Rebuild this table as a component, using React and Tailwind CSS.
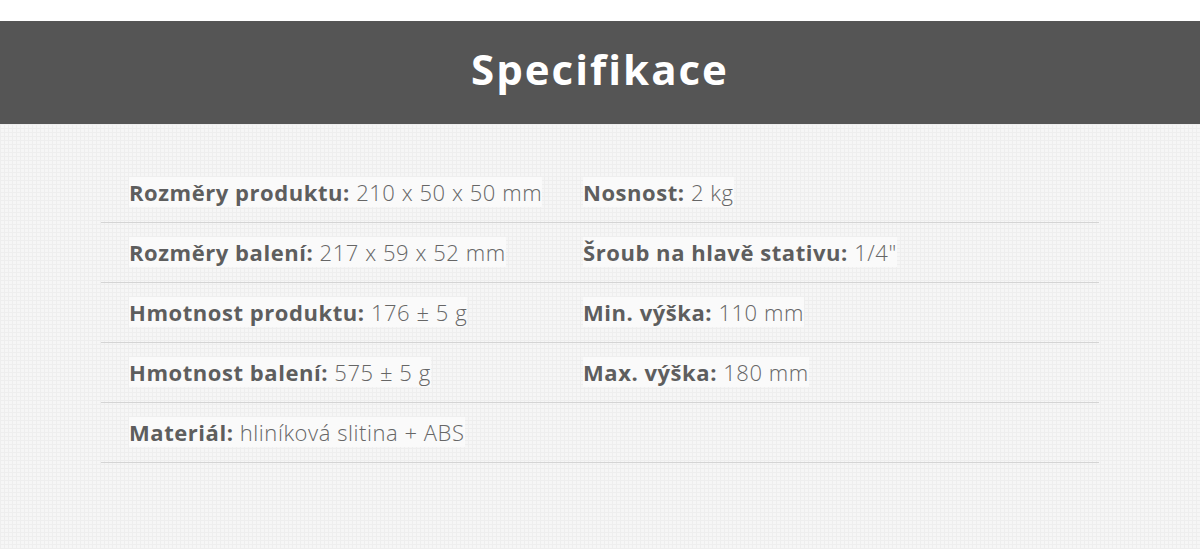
const rows = [
  [
    { label: "Rozměry produktu:", value: "210 x 50 x 50 mm" },
    { label: "Nosnost:", value: "2 kg" },
  ],
  [
    { label: "Rozměry balení:", value: "217 x 59 x 52 mm" },
    { label: "Šroub na hlavě stativu:", value: "1/4\"" },
  ],
  [
    { label: "Hmotnost produktu:", value: "176 ± 5 g" },
    { label: "Min. výška:", value: "110 mm" },
  ],
  [
    { label: "Hmotnost balení:", value: "575 ± 5 g" },
    { label: "Max. výška:", value: "180 mm" },
  ],
  [{ label: "Materiál:", value: "hliníková slitina + ABS" }, null],
];

const Cell = ({ item }) => {
  if (!item) return <div />;
  return (
    <div className="flex items-center pl-7 pb-[2px]">
      <span className="whitespace-nowrap bg-[#fafafa] text-[22px] leading-[30px] text-[#666] tracking-[0.55px]">
        <b className="font-bold text-[#5e5e5e]">{item.label}</b>{" "}
        <span className="font-light">{item.value}</span>
      </span>
    </div>
  );
};

export default function App() {
  return (
    <div
      className="w-[1200px] h-[549px] overflow-hidden bg-white"
      style={{ fontFamily: '"Open Sans", "Noto Sans", sans-serif' }}
    >
      <div className="h-[21px] bg-white" />
      <div className="h-[103px] bg-[#555555] flex items-center justify-center">
        <h2 className="text-[42px] font-bold text-white tracking-[2px] leading-none pb-[7px]">
          Specifikace
        </h2>
      </div>
      <div className="h-[425px] bg-[#f6f6f6] bg-[linear-gradient(#eeeeee_1px,transparent_1px),linear-gradient(90deg,#eeeeee_1px,transparent_1px)] bg-[size:4px_4px] pt-[39px]">
        <div className="mx-[101px] flex flex-col">
          {rows.map((row, i) => (
            <div
              key={i}
              className="grid grid-cols-[454px_1fr] h-[60px] border-b border-[#d4d4d4]"
            >
              <Cell item={row[0]} />
              <Cell item={row[1]} />
            </div>
          ))}
        </div>
      </div>
    </div>
  );
}
